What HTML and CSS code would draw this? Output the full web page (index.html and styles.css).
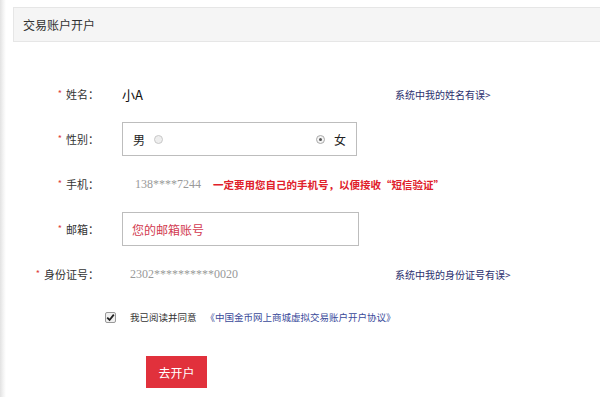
FILE: index.html
```html
<!DOCTYPE html>
<html lang="zh-CN">
<head>
    <meta charset="UTF-8">
    <meta name="viewport" content="width=device-width, initial-scale=1.0">
    <title>交易账户开户</title>
    <link rel="stylesheet" href="styles.css">
</head>
<body>
    <div class="page">
        <div class="panel-title">交易账户开户</div>

        <form class="open-form">
            <div class="form-row">
                <label class="form-label"><i>*</i>姓名：</label>
                <span class="field-value name-value">小A</span>
                <a class="fix-link" href="#">系统中我的姓名有误&gt;</a>
            </div>

            <div class="form-row">
                <label class="form-label"><i>*</i>性别：</label>
                <div class="gender-box">
                    <span class="gender-opt">男 <span class="radio"></span></span>
                    <span class="gender-opt"><span class="radio checked"></span> 女</span>
                </div>
            </div>

            <div class="form-row">
                <label class="form-label"><i>*</i>手机：</label>
                <span class="num-value phone-value">138****7244</span>
                <span class="phone-note">一定要用您自己的手机号，以便接收“短信验证”</span>
            </div>

            <div class="form-row">
                <label class="form-label"><i>*</i>邮箱：</label>
                <input class="email-input" type="text" placeholder="您的邮箱账号">
            </div>

            <div class="form-row id-row">
                <label class="form-label"><i>*</i>身份证号：</label>
                <span class="field-value num-value id-value">2302**********0020</span>
                <a class="fix-link" href="#">系统中我的身份证号有误&gt;</a>
            </div>

            <div class="agree-row">
                <span class="check-box">
                    <svg width="9" height="9" viewBox="0 0 9 9"><path d="M1.2 4.6 L3.6 7 L7.8 1.6" fill="none" stroke="#222" stroke-width="1.8"/></svg>
                </span>
                <span class="agree-text">我已阅读并同意</span>
                <a class="agree-link" href="#">《中国金币网上商城虚拟交易账户开户协议》</a>
            </div>

            <button type="button" class="submit-btn">去开户</button>
        </form>
    </div>
</body>
</html>
```
FILE: styles.css
```css
/* General Styling */
body {
    margin: 0;
    padding: 0;
    font-family: "Noto Sans CJK SC", "Liberation Sans", sans-serif;
    font-size: 12px;
    color: #333;
    background: #fff;
}

.page {
    min-height: 100vh;
    padding-top: 7px;
    box-sizing: border-box;
    background: linear-gradient(to right, #e2e2e2 0, #f2f2f2 3px, #fff 6px);
}

.panel-title {
    margin-left: 13px;
    height: 33px;
    line-height: 33px;
    padding-left: 9px;
    background-color: #f5f5f5;
    border: 1px solid #e6e6e6;
    border-right: none;
    color: #333;
    font-size: 12px;
}

.open-form {
    padding-top: 35px;
}

.form-row {
    display: flex;
    align-items: center;
    height: 34px;
    margin-bottom: 11px;
}

.id-row {
    margin-top: 4px;
    margin-bottom: 9px;
}

.form-label {
    width: 99px;
    margin-right: 23px;
    text-align: right;
    color: #333;
    font-size: 11px;
}

.form-label i {
    font-style: normal;
    color: #e03a3a;
    font-size: 9px;
    margin-right: 4px;
    vertical-align: 2px;
}

.field-value {
    width: 273px;
    box-sizing: border-box;
}

.name-value {
    font-size: 13px;
    color: #111;
}

.num-value {
    font-family: "Liberation Serif", serif;
    font-size: 12px;
    color: #999;
}

.phone-value {
    padding-left: 13px;
    margin-right: 12px;
}

.id-value {
    padding-left: 8px;
}

.phone-note {
    color: #e0202a;
    font-size: 10.5px;
    font-weight: bold;
}

.fix-link {
    color: #2b2f6e;
    font-size: 10px;
    text-decoration: none;
}

.gender-box {
    display: flex;
    justify-content: space-between;
    align-items: center;
    width: 235px;
    height: 34px;
    box-sizing: border-box;
    padding: 0 10px;
    border: 1px solid #bdbdbd;
    font-size: 12px;
    color: #222;
}

.gender-opt {
    display: flex;
    align-items: center;
    gap: 9px;
}

.radio {
    display: inline-block;
    width: 9px;
    height: 9px;
    border-radius: 50%;
    border: 1px solid #c8c8c8;
    background: #eee;
    box-sizing: border-box;
    position: relative;
}

.radio.checked {
    background: #f4f4f4;
    border-color: #aaa;
}

.radio.checked::after {
    content: "";
    position: absolute;
    left: 2px;
    top: 2px;
    width: 3px;
    height: 3px;
    border-radius: 50%;
    background: #555;
}

.email-input {
    width: 237px;
    height: 34px;
    box-sizing: border-box;
    padding: 0 9px;
    border: 1px solid #bdbdbd;
    font-family: inherit;
    font-size: 12px;
    outline: none;
}

.email-input::placeholder {
    color: #d23a50;
}

.agree-row {
    display: flex;
    align-items: center;
    height: 34px;
    padding-left: 105px;
}

.check-box {
    display: inline-flex;
    align-items: center;
    justify-content: center;
    width: 11px;
    height: 11px;
    box-sizing: border-box;
    border: 1px solid #999;
    border-radius: 2px;
    background: #f0f0f0;
    margin-right: 14px;
}

.agree-text {
    color: #333;
    font-size: 9.5px;
    margin-right: 9px;
}

.agree-link {
    color: #3a4a9a;
    font-size: 9.5px;
    text-decoration: none;
}

.submit-btn {
    display: block;
    margin: 22px 0 0 146px;
    width: 61px;
    height: 32px;
    border: none;
    background-color: #e1313c;
    color: #fff;
    font-family: inherit;
    font-size: 12px;
    cursor: pointer;
}
```
